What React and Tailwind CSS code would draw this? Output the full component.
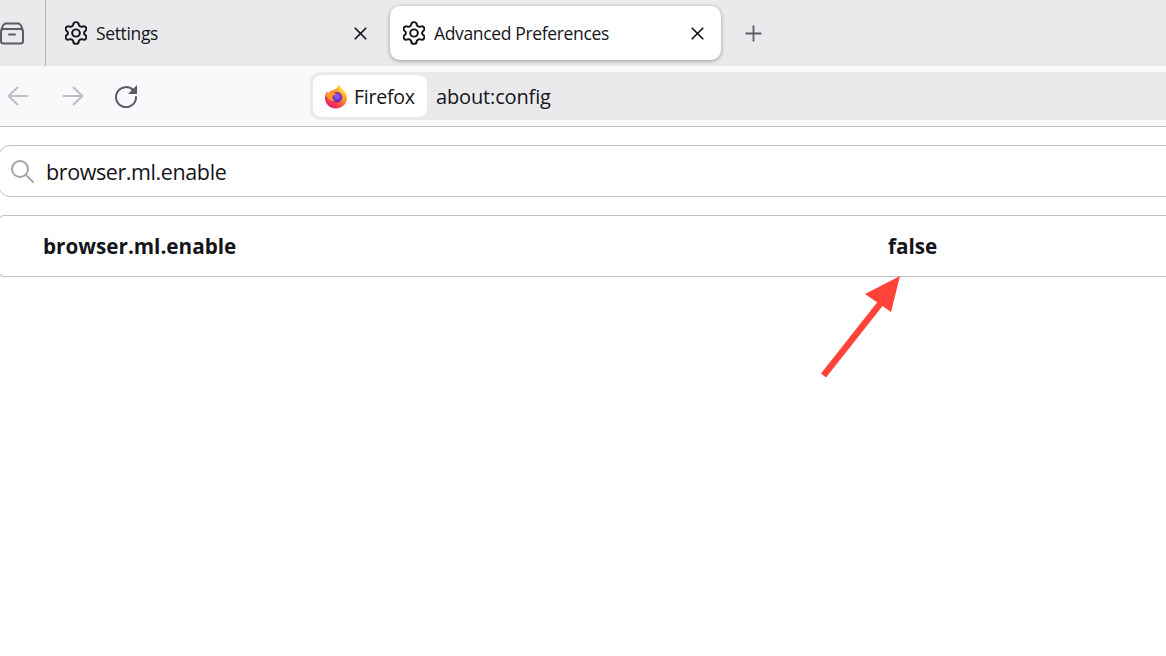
import React from "react";
import { X, Plus } from "lucide-react";

function Gear() {
  return (
    <svg width="22" height="24" viewBox="2.500 1 19 22" preserveAspectRatio="none" fill="none" stroke="#15141a" strokeWidth="1.750" strokeLinejoin="round" className="shrink-0">
      <path d="M9.671 4.136a2.34 2.34 0 0 1 4.659 0 2.34 2.34 0 0 0 3.319 1.915 2.34 2.34 0 0 1 2.33 4.033 2.34 2.34 0 0 0 0 3.831 2.34 2.34 0 0 1-2.33 4.033 2.34 2.34 0 0 0-3.319 1.915 2.34 2.34 0 0 1-4.659 0 2.34 2.34 0 0 0-3.32-1.915 2.34 2.34 0 0 1-2.33-4.033 2.34 2.34 0 0 0 0-3.831A2.34 2.34 0 0 1 6.35 6.051a2.34 2.34 0 0 0 3.32-1.915" />
      <circle cx="12" cy="12" r="3.300" />
    </svg>
  );
}

function FirefoxLogo() {
  return (
    <svg width="24" height="26" viewBox="0 0 24 26" className="shrink-0">
      <defs>
        <linearGradient id="ffa" x1="0.8" y1="0.1" x2="0.2" y2="0.95">
          <stop offset="0" stopColor="#ffd43a" />
          <stop offset="0.4" stopColor="#ff8a2a" />
          <stop offset="0.75" stopColor="#ff3d4f" />
          <stop offset="1" stopColor="#e3147e" />
        </linearGradient>
      </defs>
      <path d="M15 1.500c.4 2.800 3 3.600 5.300 6.600 1.600 2 2.600 4.300 2.600 7 0 6-5 10.400-11 10.400S1 21 1 14.800c0-2.400.6-4.500 2-6.300.2 1 .7 1.700 1.400 2.200.5-1.700 2-2.900 3.600-3.200C10.500 6.800 14 5 15 1.500z" fill="url(#ffa)" />
      <path d="M15 1.500c.4 2.800 3 3.600 5.300 6.600 1.400 1.900 2.400 4 2.600 6.400-1.200-3-3-4.400-5.400-5.600C15.800 7.700 15 5 15 1.500z" fill="#ffdf4f" />
      <circle cx="12.800" cy="14.300" r="5.200" fill="#6b2bbd" />
      <circle cx="13.300" cy="13.600" r="2.900" fill="#8f4fe8" />
      <path d="M2 11.500c2-1.800 5-2.400 8-1.500 1 .3 2 .8 2.500 1.500-2 .2-3.500.6-4 2.300-.4 1.800 1 3.400 3 3.800-2.800.8-6.300-.2-7.800-2.700C3 13.800 2.300 12.700 2 11.500z" fill="#ff9a2a" />
    </svg>
  );
}

function NavArrow({ flip }) {
  return (
    <svg width="22" height="20" viewBox="0 0 22 20" fill="none" stroke="#bdbdc2" strokeWidth="2" strokeLinecap="round" strokeLinejoin="round" className={flip ? "-scale-x-100 shrink-0" : "shrink-0"}>
      <path d="M1.500 10h19M10.500 1.500L1.500 10l9 8.500" />
    </svg>
  );
}

function Tab({ label, active, className }) {
  return (
    <div className={`flex items-center h-[54px] rounded-[10px] pl-[13px] gap-[9px] ${active ? "bg-white shadow-[0_1px_4px_rgba(0,0,0,0.35)]" : ""} ${className}`}>
      <Gear />
      <span className="text-[17.500px] tracking-[-0.35px] leading-none pt-[1px] text-[#15141a] flex-1 whitespace-nowrap">{label}</span>
      <X size={21} strokeWidth={2} className="text-[#15141a] shrink-0" />
    </div>
  );
}

export default function App() {
  return (
    <div className="w-[1166px] h-[656px] overflow-hidden bg-white font-['Open_Sans','Noto_Sans',sans-serif] text-[#15141a]">
      <div className="h-[66px] bg-[#eaeaed] flex items-center">
        <div className="w-[46px] h-full border-r border-[#b5b5ba] flex items-center shrink-0">
          <svg width="25" height="24" viewBox="0 0 25 24" fill="none" stroke="#5b5b66" strokeWidth="2">
            <rect x="1" y="8" width="22" height="14.500" rx="2.500" />
            <path d="M5 2.500h14" strokeLinecap="round" />
            <path d="M5 2.500C3.500 3.500 2 5 1.500 8M19 2.500c1.500 1 3 2.500 3.500 5.500" />
            <path d="M9 13.500h6" strokeLinecap="round" />
          </svg>
        </div>
        <Tab label="Settings" className="w-[338px] ml-[6px] pr-[19px]" />
        <Tab label="Advanced Preferences" active className="w-[331px] pr-[13px]" />
        <Plus size={25} strokeWidth={1.7} className="text-[#5b5b66] ml-5" />
      </div>
      <div className="h-[61px] bg-[#f9f9fb] border-b border-[#c3c1cb] flex items-center">
        <div className="flex items-center w-[310px] shrink-0 pl-[7px] gap-[33px]">
          <NavArrow />
          <NavArrow flip />
          <svg width="24" height="24" viewBox="0 0 24 24" fill="none" className="shrink-0 -ml-[3px] -mt-[1px]">
            <path d="M19.500 6.500A10 10 0 1 0 22 13" stroke="#5b5b66" strokeWidth="2" strokeLinecap="round" />
            <path d="M23 1v9h-9z" fill="#5b5b66" />
          </svg>
        </div>
        <div className="flex-1 h-[48px] mb-[1px] bg-[#eaeaed] rounded-l-[10px] flex items-center pl-[3px]">
          <div className="h-[42px] w-[114px] bg-white rounded-[9px] flex items-center pl-[11px] gap-[6px]">
            <FirefoxLogo />
            <span className="text-[19.500px] tracking-[-0.25px] leading-none pt-[2px]">Firefox</span>
          </div>
          <span className="text-[20px] tracking-[-0.15px] leading-none ml-[9px] pt-[2px] text-[#15141a]">about:config</span>
        </div>
      </div>
      <div className="pt-[18px] pb-[18px]">
        <div className="h-[52px] -mr-4 border border-[#c3c1cb] rounded-l-[12px] flex items-center -ml-[2px] pl-[11px] gap-[11px]">
          <svg width="25" height="25" viewBox="0 0 25 25" fill="none" stroke="#a5a5a8" strokeWidth="2" className="shrink-0">
            <circle cx="10" cy="10" r="8" />
            <path d="M16 16l7 7" strokeLinecap="round" />
          </svg>
          <span className="text-[21.500px] tracking-[-0.4px] leading-none pt-[1px]">browser.ml.enable</span>
        </div>
      </div>
      <div className="relative">
        <div className="h-[62px] -mr-4 -ml-[2px] border-y border-l border-[#c3c1cb] rounded-l-[6px] flex items-center font-bold text-[20.700px] leading-none">
          <span className="ml-[44px] w-[845px] pt-[1px]">browser.ml.enable</span>
          <span className="pt-[1px]">false</span>
        </div>
        <svg width="90" height="112" viewBox="0 0 90 112" className="absolute left-[818px] top-[60px]">
          <path d="M5.500 100.500L62 29" stroke="#ff4338" strokeWidth="6.500" />
          <path d="M82 1L47 19 73 37z" fill="#ff4338" />
        </svg>
      </div>
    </div>
  );
}
